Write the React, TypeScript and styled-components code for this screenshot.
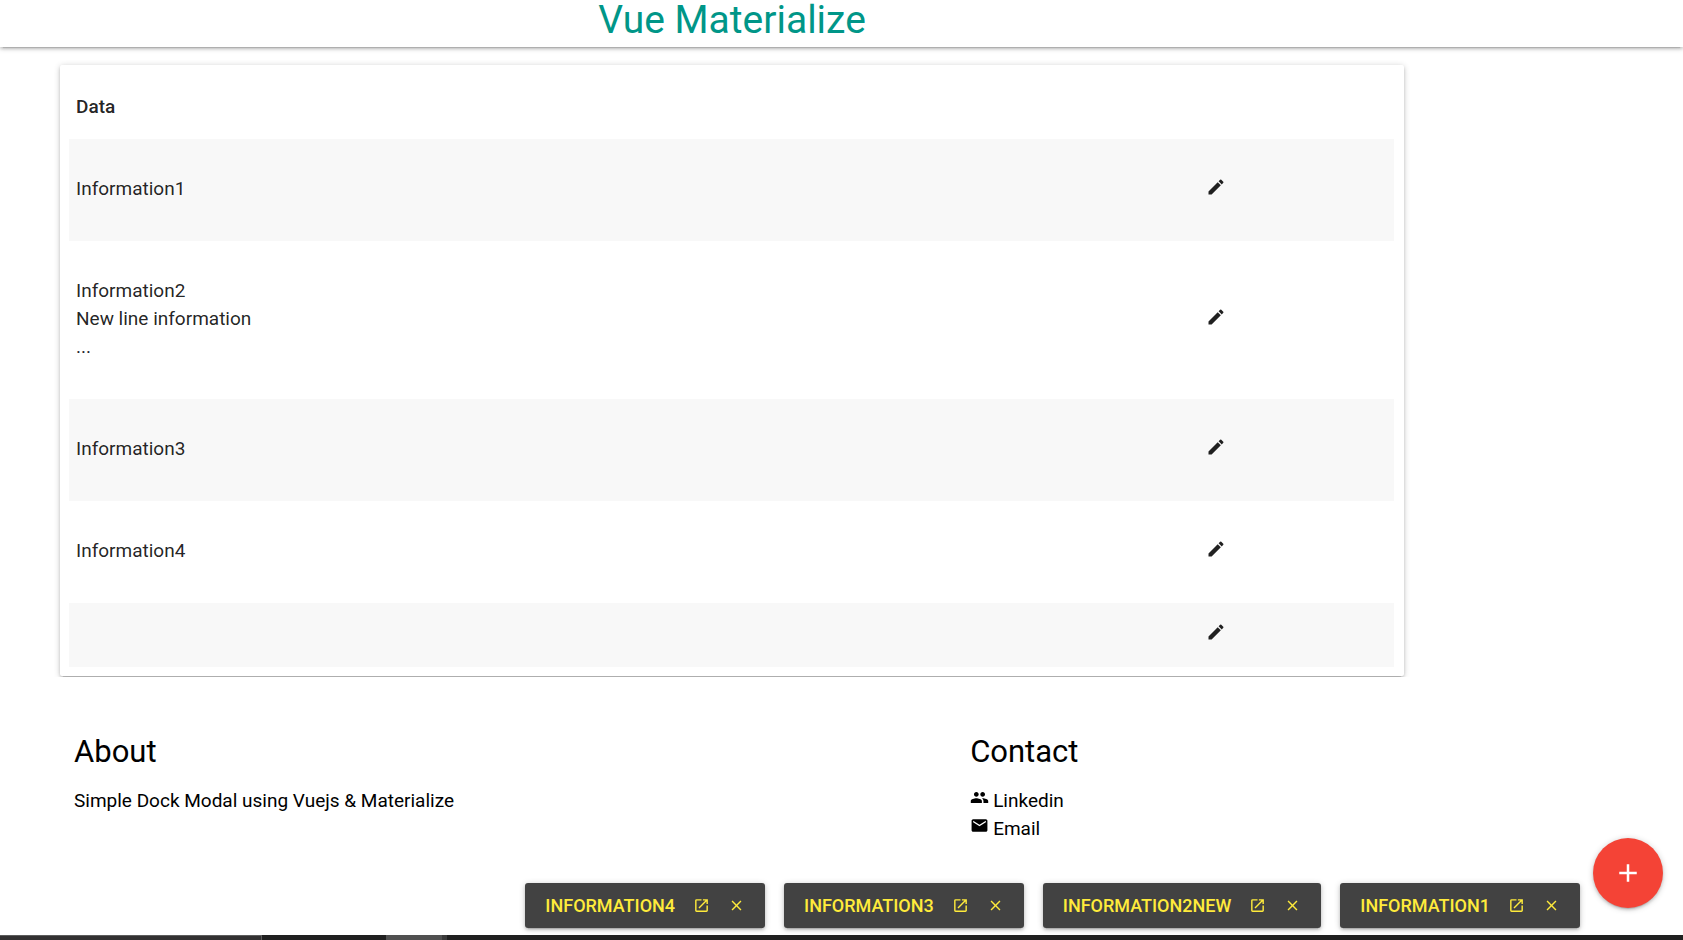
import React from "react";
import styled, { createGlobalStyle } from "styled-components";
import {
  MdAdd,
  MdClose,
  MdEdit,
  MdEmail,
  MdLaunch,
  MdPeople,
} from "react-icons/md";

const GlobalStyle = createGlobalStyle`
  *, *::before, *::after { box-sizing: border-box; }
  body {
    margin: 0;
    background: #fff;
    color: rgba(0, 0, 0, 0.87);
    font-family: Roboto, "Liberation Sans", sans-serif;
    font-size: 19px;
    line-height: 28px;
  }
  button { font: inherit; color: inherit; background: none; border: 0; padding: 0; cursor: pointer; }
  a { color: inherit; text-decoration: none; }
`;

const shadow =
  "0 2px 3px 0 rgba(0,0,0,0.14), 0 4px 1px -3px rgba(0,0,0,0.12), 0 1px 6px 0 rgba(0,0,0,0.2)";

const Page = styled.div`
  display: flex;
  flex-direction: column;
  min-height: 100vh;
`;

const NavBar = styled.header`
  height: 47px;
  box-shadow: ${shadow};
`;

/* Content keeps clear of the right-hand side, where the action button lives. */
const Column = styled.div`
  width: 87%;
  padding: 0 60px;
`;

const Brand = styled.h1`
  margin: 0;
  color: #009688;
  font-size: 39px;
  font-weight: 400;
  line-height: 40px;
  text-align: center;
`;

const Card = styled.section`
  margin: 18px 0 1px;
  padding: 9px 10px 9px 9px;
  border-radius: 2px;
  background: #fff;
  box-shadow: ${shadow};
`;

const DataTable = styled.table`
  width: 100%;
  border-collapse: collapse;
  table-layout: fixed;
`;

const HeadCell = styled.th<{ $width?: string }>`
  width: ${(p) => p.$width ?? "auto"};
  height: 65px;
  padding: 18px 7px;
  text-align: left;
  font-weight: 500;
`;

const Row = styled.tr`
  &:nth-child(odd) { background: #f8f8f8; }
`;

const Cell = styled.td`
  padding: 18px 7px;
  vertical-align: middle;
`;

const Entry = styled.div`
  margin: 18px 0 20px;
  white-space: pre-line;
`;

const EditButton = styled.button`
  display: block;
  height: 28px;
  svg { display: block; margin-bottom: 7px; }
`;

const PageFooter = styled.footer`
  position: relative;
  flex: 1;
  display: flex;
  flex-direction: column;
  background: #fff;
  color: #000;
`;

const FooterGrid = styled.div`
  display: grid;
  grid-template-columns: 2fr 1fr;
  padding-top: 58px;
`;

const FooterBlock = styled.div`
  padding: 0 14px;
`;

const FooterTitle = styled.h2`
  margin: 0 0 18px;
  font-size: 31px;
  font-weight: 400;
  line-height: 34px;
`;

const FooterText = styled.p`
  margin: 0;
`;

const LinkList = styled.ul`
  margin: 0;
  padding: 0;
  list-style: none;
`;

const ContactLink = styled.a`
  display: flex;
  gap: 4px;
  svg { margin-top: 1px; }
`;

const Dock = styled.div`
  display: flex;
  justify-content: flex-end;
  gap: 19px;
  margin-top: auto;
  padding: 0 103px 7px 20px;
`;

const DockTab = styled.div`
  display: flex;
  align-items: center;
  gap: 18px;
  height: 45px;
  padding: 0 20px;
  border-radius: 3px;
  background: #424242;
  color: #ffeb3b;
  box-shadow: ${shadow};
  button { white-space: nowrap; }
  svg { display: block; }
`;

const DockLabel = styled.button`
  && {
    font-size: 18px;
    font-weight: 500;
    text-transform: uppercase;
  }
`;

const AddButton = styled.button`
  position: fixed;
  right: 20px;
  bottom: 32px;
  display: grid;
  place-items: center;
  width: 70px;
  height: 70px;
  border-radius: 50%;
  background: #f44336;
  color: #fff;
  box-shadow: ${shadow};
`;

const Taskbar = styled.div`
  display: flex;
  height: 5px;
  background: #202020;
`;

const TaskSegment = styled.span<{ $width: number; $color: string; $edge?: string }>`
  width: ${(p) => p.$width}px;
  background: ${(p) => p.$color};
  border-top: ${(p) => (p.$edge ? `1px solid ${p.$edge}` : "0")};
  border-right: ${(p) => (p.$edge ? `1px solid ${p.$edge}` : "0")};
`;

const entries = [
  "Information1",
  "Information2\nNew line information\n...",
  "Information3",
  "Information4",
  "",
];

const docked = ["Information4", "Information3", "Information2new", "Information1"];

export default function App() {
  return (
    <Page>
      <GlobalStyle />
      <NavBar>
        <Column>
          <Brand>Vue Materialize</Brand>
        </Column>
      </NavBar>
      <Column as="main">
        <Card>
          <DataTable>
            <thead>
              <tr>
                <HeadCell scope="col">Data</HeadCell>
                <HeadCell $width="195px" aria-label="Edit" />
              </tr>
            </thead>
            <tbody>
              {entries.map((text, i) => (
                <Row key={i}>
                  <Cell>{text && <Entry>{text}</Entry>}</Cell>
                  <Cell>
                    <EditButton aria-label="Edit entry">
                      <MdEdit size={20} />
                    </EditButton>
                  </Cell>
                </Row>
              ))}
            </tbody>
          </DataTable>
        </Card>
      </Column>
      <PageFooter>
        <Column>
          <FooterGrid>
            <FooterBlock>
              <FooterTitle>About</FooterTitle>
              <FooterText>Simple Dock Modal using Vuejs &amp; Materialize</FooterText>
            </FooterBlock>
            <FooterBlock>
              <FooterTitle>Contact</FooterTitle>
              <LinkList>
                <li>
                  <ContactLink href="#linkedin">
                    <MdPeople size={19} />
                    Linkedin
                  </ContactLink>
                </li>
                <li>
                  <ContactLink href="#email">
                    <MdEmail size={19} />
                    Email
                  </ContactLink>
                </li>
              </LinkList>
            </FooterBlock>
          </FooterGrid>
        </Column>
        <Dock>
          {docked.map((name) => (
            <DockTab key={name}>
              <DockLabel>{name}</DockLabel>
              <button aria-label={`Open ${name}`}>
                <MdLaunch size={17} />
              </button>
              <button aria-label={`Close ${name}`}>
                <MdClose size={17} />
              </button>
            </DockTab>
          ))}
        </Dock>
        <Taskbar>
          <TaskSegment $width={262} $color="#333132" $edge="#5c5c5c" />
          <TaskSegment $width={124} $color="#202020" />
          <TaskSegment $width={56} $color="#505050" />
          <TaskSegment $width={5} $color="#3a3a3a" />
        </Taskbar>
      </PageFooter>
      <AddButton aria-label="Add entry">
        <MdAdd size={30} />
      </AddButton>
    </Page>
  );
}
